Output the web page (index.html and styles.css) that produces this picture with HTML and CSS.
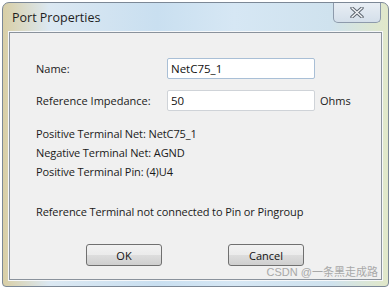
FILE: index.html
```html
<!DOCTYPE html>
<html lang="en">
<head>
    <meta charset="UTF-8">
    <title>Port Properties</title>
    <link rel="stylesheet" href="styles.css">
</head>
<body>
    <div class="window">
        <div class="titlebar">
            <span class="title">Port Properties</span>
            <div class="close">
                <svg width="14" height="11" viewBox="0 0 14 11">
                    <path d="M2 1 L12 10 M12 1 L2 10" stroke="#5d6670" stroke-width="3.4" stroke-linecap="round"/>
                    <path d="M2 1 L12 10 M12 1 L2 10" stroke="#f4f6f8" stroke-width="1.4" stroke-linecap="round"/>
                </svg>
            </div>
        </div>
        <div class="client">
            <div class="form">
                <div class="row">
                    <label>Name:</label>
                    <input class="field" type="text" value="NetC75_1">
                </div>
                <div class="row">
                    <label>Reference Impedance:</label>
                    <input class="field plain" type="text" value="50">
                    <span class="unit">Ohms</span>
                </div>
            </div>
            <div class="info">
                <p>Positive Terminal Net: NetC75_1</p>
                <p>Negative Terminal Net: AGND</p>
                <p>Positive Terminal Pin: (4)U4</p>
            </div>
            <p class="note">Reference Terminal not connected to Pin or Pingroup</p>
            <div class="buttons">
                <button class="btn">OK</button>
                <button class="btn">Cancel</button>
            </div>
            <div class="watermark">CSDN @一条黑走成路</div>
        </div>
    </div>
</body>
</html>
```

FILE: styles.css
```css
body {
    margin: 0;
    width: 391px;
    height: 289px;
    background: #ffffff;
    font-family: "Open Sans", "Liberation Sans", sans-serif;
    font-size: 11px;
    color: #1a1a1a;
    overflow: hidden;
}

.window {
    margin: 2px 2px 0 2px;
    height: 285px;
    box-sizing: border-box;
    border: 1px solid #7c8896;
    border-radius: 7px 7px 4px 4px;
    padding: 0 6px 6px 6px;
    background: linear-gradient(90deg, #d9cfa6 0%, #dbe8f2 12%, #c9dff0 40%, #d6e7f4 60%, #cfe2ee 85%, #e1e8c9 100%);
    display: flex;
    flex-direction: column;
}

.titlebar {
    height: 29px;
    display: flex;
    justify-content: space-between;
    align-items: flex-start;
}

.title {
    margin: 6px 0 0 3px;
    font-size: 12.5px;
    color: #1e1e1e;
}

.close {
    width: 46px;
    height: 19px;
    margin-right: 1px;
    border: 1px solid #8d9aab;
    border-top: none;
    border-radius: 0 0 5px 5px;
    background: linear-gradient(#e8eef4, #d4dfea);
    display: flex;
    align-items: center;
    justify-content: center;
}

.client {
    flex: 1;
    position: relative;
    border: 1px solid #8a929c;
    background: #f0f0f0;
    padding: 25px 0 0 26px;
    box-shadow: 0 0 0 1px #f6f8fa;
}

.form {
    display: flex;
    flex-direction: column;
    gap: 11px;
}

.row {
    display: flex;
    align-items: center;
}

.row label {
    width: 131px;
}

.field {
    width: 148px;
    height: 21px;
    box-sizing: border-box;
    border: 1px solid #a9bfd6;
    border-radius: 2px;
    background: #ffffff;
    padding: 0 0 0 3px;
    font: inherit;
    font-size: 11.5px;
    color: #111;
}

.field.plain {
    border-color: #cfd3d8;
}

.unit {
    margin-left: 5px;
}

.info {
    margin-top: 16px;
    display: flex;
    flex-direction: column;
    gap: 6px;
}

.info p, .note {
    margin: 0;
    line-height: 13px;
    letter-spacing: -0.1px;
}

.note {
    margin-top: 27px;
}

.buttons {
    display: flex;
    gap: 66px;
    margin: 26px 0 0 50px;
}

.btn {
    width: 76px;
    height: 22px;
    border: 1px solid #707070;
    border-radius: 3px;
    background: linear-gradient(#f2f2f2 0%, #ebebeb 50%, #dddddd 51%, #cfcfcf 100%);
    font: inherit;
    color: #111;
    padding: 0;
}

.watermark {
    position: absolute;
    right: 3px;
    bottom: 0;
    font-family: "Liberation Sans", "Noto Sans CJK SC", sans-serif;
    font-size: 11px;
    color: #a8a8a8;
}
```
